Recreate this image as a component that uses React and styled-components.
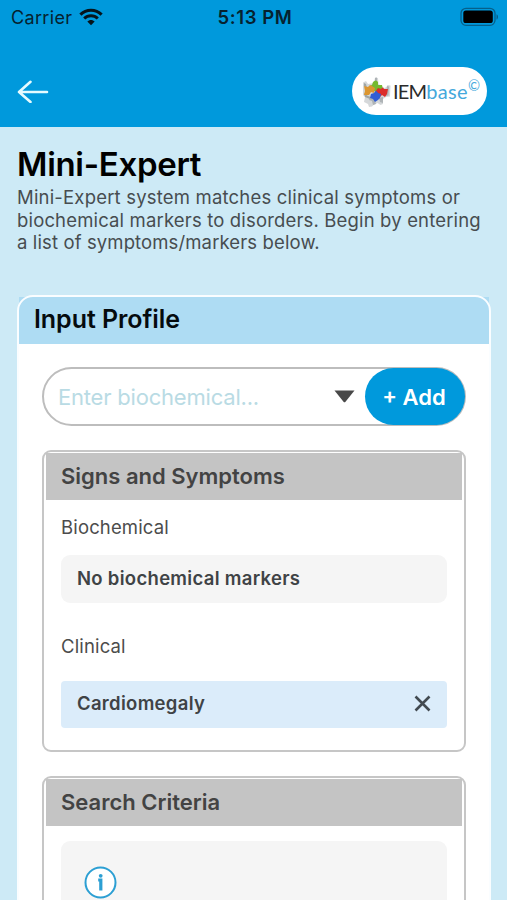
import React from "react";
import styled, { createGlobalStyle } from "styled-components";

const GlobalStyle = createGlobalStyle`
  * { box-sizing: border-box; }
  body { margin: 0; background: #cdeaf6; font-family: Inter, "Liberation Sans", sans-serif; }
`;

const Screen = styled.main`
  width: 507px;
  height: 900px;
  overflow: hidden;
  background: #cdeaf6;
`;

const TopBar = styled.header`
  height: 127px;
  background: #0099dc;
`;

const StatusBar = styled.div`
  display: grid;
  grid-template-columns: 1fr auto 1fr;
  align-items: center;
  height: 34px;
  padding: 0 8px 0 11px;
  color: #06222f;
`;

const Carrier = styled.div`
  display: flex;
  align-items: center;
  gap: 7px;
  font-size: 18px;
  letter-spacing: 0.35px;
`;

const Clock = styled.time`
  font-size: 18.5px;
  font-weight: 600;
  letter-spacing: 0.6px;
`;

const BatteryIcon = styled.svg`
  justify-self: end;
`;

const NavBar = styled.nav`
  display: flex;
  align-items: center;
  justify-content: space-between;
  height: 48px;
  margin-top: 33px;
  padding: 0 20px 0 17px;
`;

const IconButton = styled.button`
  display: flex;
  padding: 0;
  border: 0;
  background: none;
`;

const LogoPill = styled.div`
  display: flex;
  align-items: center;
  width: 135px;
  height: 48px;
  padding-left: 10px;
  border-radius: 24px;
  background: #fff;
`;

const LogoText = styled.span`
  display: flex;
  margin-left: 2px;
  color: #2b2b2b;
  font-family: Lato, sans-serif;
  font-size: 20px;
  line-height: 25px;
  letter-spacing: -0.8px;
`;

const LogoAccent = styled.span`
  color: #45a9dc;
  letter-spacing: 0.3px;
`;

const LogoMark = styled.span`
  margin: -3px 0 0;
  color: #45a9dc;
  font-size: 14.5px;
  line-height: 20px;
`;

const Intro = styled.section`
  height: 168px;
  padding: 17px 17px 0;
`;

const PageTitle = styled.h1`
  margin: 0;
  color: #000;
  font-size: 33px;
  font-weight: 600;
  line-height: 40px;
  letter-spacing: -0.3px;
`;

const Description = styled.p`
  margin: 2px 0 0;
  color: #474d50;
  font-size: 18.5px;
  line-height: 22.6px;
  white-space: nowrap;
`;

const Line = styled.span`
  display: block;
  letter-spacing: ${(p) => p.$spacing};
`;

const ProfileCard = styled.section`
  position: relative;
  height: 700px;
  margin: 0 16px 0 17px;
  padding: 2px;
  border-radius: 16px 16px 0 0;
  background: linear-gradient(#fff, #fff) 0 20px no-repeat;

  &::after {
    content: "";
    position: absolute;
    inset: 0;
    border: 2px solid #fafdff;
    border-radius: 16px 16px 0 0;
    pointer-events: none;
  }
`;

const CardTitle = styled.h2`
  height: 47px;
  margin: 0;
  padding-left: 15px;
  background: #aedcf3;
  color: #050b0e;
  font-size: 25px;
  font-weight: 600;
  line-height: 45px;
  letter-spacing: -0.05px;
`;

const CardBody = styled.div`
  display: flex;
  flex-direction: column;
  gap: 24px;
  padding: 23px 23px 0;
`;

const SearchField = styled.div`
  display: flex;
  align-items: center;
  justify-content: space-between;
  height: 59px;
  padding-left: 14px;
  border: 2px solid #bdbdbd;
  border-radius: 30px;
`;

const Placeholder = styled.span`
  flex: 1;
  color: #b9dbe4;
  font-size: 22px;
  letter-spacing: -0.2px;
`;

const CaretIcon = styled.svg`
  margin-right: 10px;
`;

const AddButton = styled.button`
  width: 100px;
  height: 57px;
  margin-right: -1px;
  padding: 0 2px 0 0;
  border: 0;
  border-radius: 29px;
  background: #0099dc;
  color: #fff;
  font-family: inherit;
  font-size: 22px;
  font-weight: 600;
`;

const Panel = styled.section`
  height: ${(p) => p.$height};
  padding: 1px 2px 2px;
  border: 2px solid #c6c6c6;
  border-radius: 9px;
`;

const PanelTitle = styled.h3`
  height: 47px;
  margin: 0;
  padding-left: 15px;
  background: #c4c4c4;
  color: #434343;
  font-size: 22px;
  font-weight: 600;
  line-height: 46px;
`;

const PanelBody = styled.div`
  padding: 15px 15px 0;
`;

const GroupLabel = styled.div`
  height: ${(p) => p.$height};
  color: #4c4c4c;
  font-size: 18.5px;
  line-height: 25px;
  letter-spacing: 0.15px;
`;

const MarkerRow = styled.div`
  display: flex;
  align-items: center;
  justify-content: space-between;
  height: ${(p) => (p.$selected ? "47px" : "48px")};
  margin-bottom: 31px;
  padding: 0 16px 3px;
  border-radius: ${(p) => (p.$selected ? "4px" : "9px")};
  background: ${(p) => (p.$selected ? "#dbecfa" : "#f5f5f5")};
  color: #3f4346;
  font-size: 18.5px;
  font-weight: 600;
  letter-spacing: 0.3px;
`;

const InfoBox = styled.div`
  height: 120px;
  padding: 25px 23px;
  border-radius: 9px;
  background: #f5f5f5;
`;

function Wifi() {
  return (
    <svg width="24" height="18" viewBox="0 0 24 18" fill="none" stroke="#06141b">
      <path d="M1.4 6.6C7.3.8 16.7.8 22.6 6.6" strokeWidth="3.1" />
      <path d="M5.2 10.5c3.8-3.6 9.8-3.6 13.6 0" strokeWidth="3" />
      <path d="M8.3 13.6c2-2.1 5.4-2.1 7.4 0L12 17.3z" fill="#06141b" stroke="none" />
    </svg>
  );
}

function Battery() {
  return (
    <BatteryIcon width="39" height="20" viewBox="0 0 39 20">
      <rect x="1" y="1.3" width="34" height="17" rx="5" fill="none" stroke="#05608b" strokeWidth="1.3" />
      <rect x="3.3" y="3.5" width="29.5" height="12.5" rx="2.6" fill="#000" />
      <path d="M36.5 7.2c2 .7 2 4.7 0 5.4z" fill="#05608b" />
    </BatteryIcon>
  );
}

function PuzzleLogo() {
  return (
    <svg width="29" height="31" viewBox="0 0 29 31">
      <path d="M1 6.5 4 5l2 3 6-1 1-5.500 3 .5.5 6 3 2 3 2 2-1 1-2 3 .5-.5 11-4 .5-3 2v5l-2.500 1-3-2-4 2-1.500 1.500-3 .500-1-3-4-2 1-5-2-2z" fill="#d5d8da" />
      <path d="m13 2 2-.5v5l-2 1zM25 10l2 .5-.5 9-3 .5 1-5zM8 21l4 1 2 6-3 1-1-4-3-1zM17 22l4-1v6l-3-1z" fill="#aeb3b6" />
      <path d="m2 7 2 1 1 4-3-2zM2 17l4 3 3 1-1 2-5-2z" fill="#9fa5a5" />
      <path d="m7 10 3-1 1-3q3-3 5 0l0 3 4 0 1 5-4 2-4-1-4 1z" fill="#74b92f" />
      <path d="m2 10 4 1q2-3 4-1l3 2-1 5-3-1-2 3-5 0 1-4z" fill="#dc9630" />
      <path d="m16 12 3 1q2-3 3 0l4 0-1 5-2 3-3-2-2 2-3-2-2-3z" fill="#dc2d2b" />
      <path d="m9 18 3-1q2-4 4 0l3 1-1 4-2 2-3 2-2-3-3-1z" fill="#315ed4" />
    </svg>
  );
}

export default function App() {
  return (
    <Screen>
      <GlobalStyle />
      <TopBar>
        <StatusBar>
          <Carrier>
            Carrier
            <Wifi />
          </Carrier>
          <Clock>5:13 PM</Clock>
          <Battery />
        </StatusBar>
        <NavBar>
          <IconButton aria-label="Back">
            <svg width="32" height="24" viewBox="0 0 32 24" fill="none" stroke="#e5fbff" strokeWidth="2.6" strokeLinecap="round" strokeLinejoin="round">
              <path d="M2 13h28M13.5 2.8 2 13l11.5 10" />
            </svg>
          </IconButton>
          <LogoPill>
            <PuzzleLogo />
            <LogoText>
              IEM<LogoAccent>base</LogoAccent>
              <LogoMark>©</LogoMark>
            </LogoText>
          </LogoPill>
        </NavBar>
      </TopBar>
      <Intro>
        <PageTitle>Mini-Expert</PageTitle>
        <Description>
          <Line $spacing="0.19px">Mini-Expert system matches clinical symptoms or</Line>
          <Line $spacing="0.16px">biochemical markers to disorders. Begin by entering</Line>
          <Line $spacing="0.12px">a list of symptoms/markers below.</Line>
        </Description>
      </Intro>
      <ProfileCard>
        <CardTitle>Input Profile</CardTitle>
        <CardBody>
          <SearchField>
            <Placeholder>Enter biochemical...</Placeholder>
            <CaretIcon width="21" height="13" viewBox="0 0 21 13">
              <path d="M.5.5h20l-9 11.2q-1 1-2 0z" fill="#484848" />
            </CaretIcon>
            <AddButton>+ Add</AddButton>
          </SearchField>
          <Panel $height="302px">
            <PanelTitle>Signs and Symptoms</PanelTitle>
            <PanelBody>
              <GroupLabel $height="40px">Biochemical</GroupLabel>
              <MarkerRow>No biochemical markers</MarkerRow>
              <GroupLabel $height="47px">Clinical</GroupLabel>
              <MarkerRow $selected>
                Cardiomegaly
                <svg width="17" height="17" viewBox="0 0 17 17" stroke="#424a50" strokeWidth="2.6">
                  <path d="m1.5 1.5 14 14m0-14-14 14" />
                </svg>
              </MarkerRow>
            </PanelBody>
          </Panel>
          <Panel $height="240px">
            <PanelTitle>Search Criteria</PanelTitle>
            <PanelBody>
              <InfoBox>
                <svg width="33" height="33" viewBox="0 0 33 33" fill="none" stroke="#2c9fd3" strokeWidth="2">
                  <circle cx="16.5" cy="16.5" r="15" fill="#fff" />
                  <path d="M14.2 14h2.6v10.6" strokeWidth="3.2" />
                  <circle cx="16.7" cy="9.8" r="1.9" fill="#2c9fd3" stroke="none" />
                </svg>
              </InfoBox>
            </PanelBody>
          </Panel>
        </CardBody>
      </ProfileCard>
    </Screen>
  );
}
